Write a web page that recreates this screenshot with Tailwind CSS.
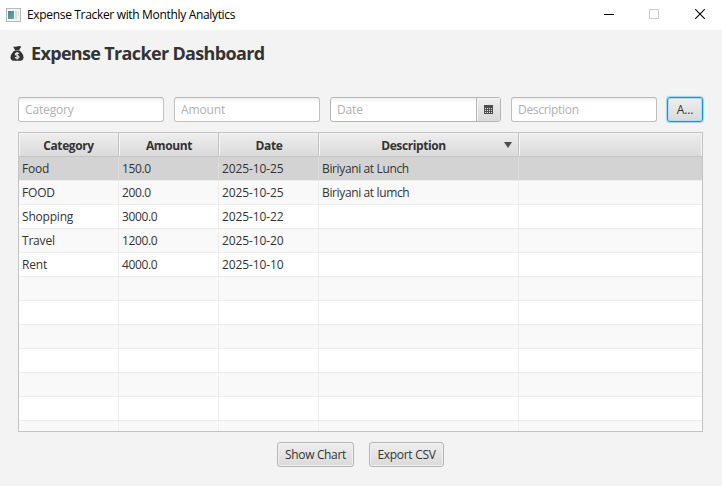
<!DOCTYPE html>
<html lang="en">
<head>
<meta charset="utf-8">
<title>Expense Tracker with Monthly Analytics</title>
<script src="https://cdn.jsdelivr.net/npm/@tailwindcss/browser@4"></script>
</head>
<body class="w-[722px] h-[486px] overflow-hidden bg-[#f3f3f3] font-['Open_Sans','Noto_Sans',sans-serif] text-[12px] leading-4 text-[#333] whitespace-nowrap">
<div class="flex flex-col h-full">
  <header class="flex items-center h-[30px] bg-white text-black shrink-0">
    <svg class="ml-[6px] mr-[6px]" width="15" height="14" viewBox="0 0 15 14" shape-rendering="crispEdges">
      <defs><linearGradient id="g" x1="0" y1="0" x2="1" y2="1"><stop offset="0" stop-color="#4a7da8"/><stop offset="1" stop-color="#5fb488"/></linearGradient></defs>
      <rect x=".5" y=".5" width="14" height="13" fill="#f4f4f4" stroke="#b3b9bd"/>
      <rect x="2" y="3" width="6" height="8" fill="url(#g)"/>
      <rect x="9" y="3" width="2" height="8" fill="#d9dcde"/><rect x="12" y="3" width="1" height="5" fill="#d5e3d8"/>
    </svg>
    <span class="tracking-[-0.33px]">Expense Tracker with Monthly Analytics</span>
    <div class="ml-auto flex items-center mr-[16px]">
      <svg width="102" height="12" viewBox="0 0 102 12" fill="none">
        <path d="M0 5.500h10" stroke="#000"/>
        <rect x="45.500" y=".5" width="9" height="9" stroke="#ccc"/>
        <path d="M91.200.2l9.600 9.600M100.800.2L91.200 9.800" stroke="#000" stroke-width="1.100"/>
      </svg>
    </div>
  </header>
  <h1 class="flex items-center pl-[10px] mt-[10px] h-[28px] text-[18px] leading-7 font-bold">
    <svg class="mr-[7px] -mt-px" width="14" height="15" viewBox="0 0 14 15" fill="#333"><path d="M3 .5Q5 1 7 .4T11.300.4L9 4.300H5.200z"/><path d="M4.800 4.500h4.500C11.500 6 13.500 8.500 13.500 11.200c0 2.500-1.500 3.500-3.200 3.500H3.700C2 14.700.5 13.700.5 11.200.5 8.500 2.600 6 4.800 4.500z"/><path d="M9 7.600C8.400 7 5.400 6.700 5.300 8.200c0 1.700 3.700.9 3.700 2.700 0 1.600-3.100 1.400-4 .6M7.100 6v7.500" stroke="#f3f3f3" stroke-width="1.100" fill="none"/></svg>
    <span class="tracking-[-0.66px] pb-[2px]">Expense Tracker Dashboard</span>
  </h1>
  <div class="flex gap-[10px] mt-[29px] px-[18px] h-[25px] text-[#b0b0b0] tracking-[-0.15px] shrink-0">
    <div class="w-[146px] border border-[#c0c0c0] border-t-[#b6b6b6] rounded-[3px] bg-linear-to-b from-[#f0f0f0] to-white to-20% pl-[6px] pt-[4px]">Category</div>
    <div class="w-[146px] border border-[#c0c0c0] border-t-[#b6b6b6] rounded-[3px] bg-linear-to-b from-[#f0f0f0] to-white to-20% pl-[6px] pt-[4px]">Amount</div>
    <div class="w-[171px] flex border border-[#b5b5b5] rounded-[3px] bg-linear-to-b from-[#f0f0f0] to-white to-20%">
      <span class="grow pl-[6px] pt-[4px]">Date</span>
      <div class="w-[24px] border-l border-[#b5b5b5] rounded-r-[2px] bg-linear-to-b from-[#eeeeee] to-[#dadada] shadow-[inset_1px_1px_0_#f6f6f6] flex items-center justify-center">
        <svg width="9" height="9" viewBox="0 0 9 9" shape-rendering="crispEdges"><path fill="#4d4d4d" d="M0 0h9v9H0z"/><path stroke="#e4e4e4" stroke-dasharray="1 1" d="M1 3.500h7M1 5.500h7M1 7.500h7"/></svg>
      </div>
    </div>
    <div class="w-[146px] border border-[#c0c0c0] border-t-[#b6b6b6] rounded-[3px] bg-linear-to-b from-[#f0f0f0] to-white to-20% pl-[6px] pt-[4px] tracking-[-0.3px]">Description</div>
    <button class="w-[36px] border border-[#039ed3] rounded-[3px] bg-linear-to-b from-[#eeeeee] to-[#dadada] shadow-[0_0_1px_1px_#9fd5ea,inset_0_0_0_1px_#b5dcea] text-[#333]">A...</button>
  </div>
  <main class="mx-[18px] mr-[19px] mt-[10px] h-[300px] border border-[#c3c3c3] bg-white overflow-hidden shrink-0">
    <div class="grid grid-cols-[100px_100px_100px_200px_1fr] grid-rows-[23px] h-[24px] border-b border-[#c5c5c5] font-bold text-center leading-[26px] bg-linear-to-b from-[#eeeeee] to-[#dadada] tracking-[-0.4px]">
      <div class="border-r border-[#c3c3c3] shadow-[inset_1px_1px_0_#f5f5f5]">Category</div>
      <div class="border-r border-[#c3c3c3] shadow-[inset_1px_1px_0_#f5f5f5] pl-px">Amount</div>
      <div class="border-r border-[#c3c3c3] shadow-[inset_1px_1px_0_#f5f5f5] pl-px">Date</div>
      <div class="border-r border-[#c3c3c3] shadow-[inset_1px_1px_0_#f5f5f5] flex"><span class="grow pl-[4px]">Description</span><svg class="mr-[6px] mt-[9px]" width="8" height="6" viewBox="0 0 8 6"><path fill="#4d4d4d" d="M0 0h8L4 6z"/></svg></div>
      <div class="shadow-[inset_1px_1px_0_#f5f5f5,inset_-1px_0_0_#f5f5f5]"></div>
    </div>
    <div id="rows"></div>
  </main>
  <footer class="flex justify-center gap-[15px] mt-[10px] mr-px">
    <button class="w-[77px] h-[25px] border border-[#b5b5b5] rounded-[3px] bg-linear-to-b from-[#eeeeee] to-[#dadada] shadow-[inset_0_0_0_1px_#f1f1f1] tracking-[-0.35px] pt-px">Show Chart</button>
    <button class="w-[75px] h-[25px] border border-[#b5b5b5] rounded-[3px] bg-linear-to-b from-[#eeeeee] to-[#dadada] shadow-[inset_0_0_0_1px_#f1f1f1] tracking-[-0.3px] pt-px">Export CSV</button>
  </footer>
</div>
<script>
const data = [['Food','150.0','2025-10-25','Biriyani at Lunch'],['FOOD','200.0','2025-10-25','Biriyani at lumch'],['Shopping','3000.0','2025-10-22',''],['Travel','1200.0','2025-10-20',''],['Rent','4000.0','2025-10-10','']];
const spacing = ['tracking-[-0.2px]', 'tracking-[-0.35px]', 'tracking-[-0.1px]', 'tracking-[-0.37px]'];
let html = '';
for (let i = 0; i < 12; i++) {
  const r = data[i] || ['','','',''];
  const bg = i === 0 ? 'bg-[#d3d3d3]' : i % 2 ? 'bg-[#f9f9f9]' : 'bg-white';
  html += `<div class="grid grid-cols-[100px_100px_100px_200px_1fr] grid-rows-[23px] h-[24px] border-b border-[#ededed] leading-[24px] ${bg}">` + r.map((t, c) => `<div class="border-r ${i ? 'border-[#ededed]' : 'border-[#dcdcdc]'} pl-[3px] ${spacing[c]}">${t}</div>`).join('') + '<div></div></div>';
}
document.getElementById('rows').innerHTML = html;
</script>
</body>
</html>
